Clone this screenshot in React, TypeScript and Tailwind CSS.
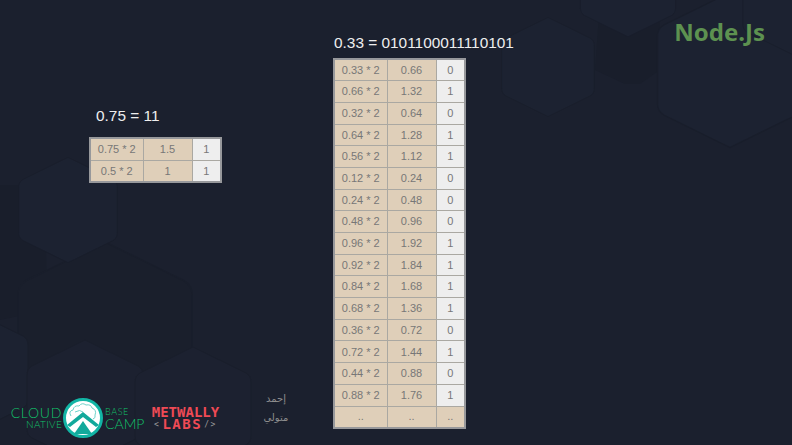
const first = [
  ["0.75 * 2", "1.5", "1"],
  ["0.5 * 2", "1", "1"],
];

const second = [
  ["0.33 * 2", "0.66", "0"],
  ["0.66 * 2", "1.32", "1"],
  ["0.32 * 2", "0.64", "0"],
  ["0.64 * 2", "1.28", "1"],
  ["0.56 * 2", "1.12", "1"],
  ["0.12 * 2", "0.24", "0"],
  ["0.24 * 2", "0.48", "0"],
  ["0.48 * 2", "0.96", "0"],
  ["0.96 * 2", "1.92", "1"],
  ["0.92 * 2", "1.84", "1"],
  ["0.84 * 2", "1.68", "1"],
  ["0.68 * 2", "1.36", "1"],
  ["0.36 * 2", "0.72", "0"],
  ["0.72 * 2", "1.44", "1"],
  ["0.44 * 2", "0.88", "0"],
  ["0.88 * 2", "1.76", "1"],
  ["..", "..", ".."],
];

function BitTable({ rows, rowClass }: { rows: string[][]; rowClass: string }) {
  return (
    <table className="w-[131px] table-fixed border-collapse border-2 border-[#97989b] text-center text-[11px] text-[#777777]">
      <colgroup>
        <col className="w-[53px]" />
        <col className="w-[49px]" />
        <col className="w-[29px]" />
      </colgroup>
      <tbody>
        {rows.map((row, i) => (
          <tr key={i} className={rowClass}>
            <td className="border border-[#aaa8a2] bg-[#dfcfb9] p-0">{row[0]}</td>
            <td className="border border-[#aaa8a2] bg-[#dfcfb9] p-0">{row[1]}</td>
            <td className={"border border-[#aaa8a2] p-0 " + (row[2] === ".." ? "bg-[#dfcfb9]" : "bg-[#eeeeee]")}>
              {row[2]}
            </td>
          </tr>
        ))}
      </tbody>
    </table>
  );
}

function Hexagons() {
  // faint honeycomb behind the slide
  const hex = "M0 -62 L53 -36 Q58 -33 58 -27 L58 27 Q58 33 53 36 L0 62 L-53 36 Q-58 33 -58 27 L-58 -27 Q-58 -33 -53 -36 Z";
  const cells = [
    { x: 105, y: 335, s: 1.5, fill: "#1a1f2c" },
    { x: 68, y: 210, s: 0.85, fill: "#1c2231" },
    { x: -30, y: 372, s: 1, fill: "#1c2231" },
    { x: 85, y: 402, s: 1, fill: "#1c2130" },
    { x: 193, y: 409, s: 1, fill: "#1c2130" },
    { x: 548, y: 67, s: 0.8, fill: "#1c2231" },
    { x: 628, y: -14, s: 0.82, fill: "#1c2231" },
    { x: 730, y: 70, s: 1.25, fill: "#1c2231" },
    { x: 795, y: 0, s: 0.9, fill: "#1c2231" },
  ];
  return (
    <svg className="absolute inset-0" width="792" height="445" viewBox="0 0 792 445">
      <path d="M600 0 L660 0 L660 70 L640 84 L625 84 L595 70 Z" fill="#191e2b" />
      <path d="M0 185 L45 185 L47 310 L0 320 Z" fill="#191e2b" />
      {cells.map((c, i) => (
        <path key={i} d={hex} fill={c.fill} stroke="#191e2b" strokeWidth="1" transform={`translate(${c.x} ${c.y}) scale(${c.s})`} />
      ))}
    </svg>
  );
}

function CampBadge() {
  return (
    <svg width="40" height="40" viewBox="0 0 40 40" className="shrink-0">
      <circle cx="20" cy="20" r="18.5" fill="#ffffff" stroke="#12b5a5" strokeWidth="3" />
      <path
        d="M8 18 Q5 13 10 12 Q11 7 16 8 Q19 4 23 7 Q28 6 29 10 Q34 12 32 17 Q33 20 30 21"
        fill="none"
        stroke="#6fd3ca"
        strokeWidth="1"
      />
      <path d="M12 14 Q17 11 20 14" fill="none" stroke="#6fd3ca" strokeWidth="1" />
      <path d="M4 27 L20 14 L36 27 L33 29 L20 19 L7 29 Z" fill="#12a99b" />
      <path d="M11 36 L20 23 L29 36 Z" fill="#12a99b" />
    </svg>
  );
}

function Logos() {
  return (
    <div className="flex items-center text-[#12c26a]">
      <div className="flex w-[50px] flex-col items-end pb-[2px] font-['Lato',sans-serif] font-light leading-none">
        <span className="h-[13px] text-[14px] leading-[13px] tracking-[0.7px]">CLOUD</span>
        <span className="h-[10px] text-[10px] leading-[10px] tracking-[0.3px]">NATIVE</span>
      </div>
      <div className="ml-[1px]">
        <CampBadge />
      </div>
      <div className="ml-[2px] flex flex-col pt-[2px] font-['Lato',sans-serif] font-light">
        <span className="h-[9px] text-[9px] leading-[9px] tracking-[0.6px]">BASE</span>
        <span className="h-[15px] text-[14px] leading-[15px]">CAMP</span>
      </div>
      <div className="ml-[5px] flex w-[72px] flex-col items-center font-['DejaVu_Sans_Mono',monospace] font-bold text-[#ef4a55]">
        <span className="h-[12px] text-[14px] leading-[12px]">METWALLY</span>
        <span className="flex h-[13px] items-center gap-[2px] text-[14px] leading-[13px] tracking-[1.5px]">
          <span className="text-[8px] font-normal text-[#9a9a9a]">&lt;</span>
          LABS
          <span className="text-[8px] font-normal text-[#9a9a9a]">/&gt;</span>
        </span>
      </div>
      <div
        dir="rtl"
        className="ml-[42px] -mt-[6px] flex flex-col items-center gap-[6px] self-start font-['DejaVu_Sans',sans-serif] text-[10px] leading-[13px] text-[#8d8d8d]"
      >
        <span>إحمد</span>
        <span>متولي</span>
      </div>
    </div>
  );
}

export default function App() {
  return (
    <div className="relative h-[445px] w-[792px] overflow-hidden bg-[#1b202e] font-['Liberation_Sans',sans-serif]">
      <Hexagons />
      <div className="relative flex h-full">
        {/* left column */}
        <div className="flex w-[333px] flex-col pb-[7px] pl-[12px] pt-[106px]">
          <div className="ml-[77px]">
            <p className="ml-[7px] text-[15.4px] leading-[20px] text-[#eeeeee]">0.75 = 11</p>
            <div className="mt-[11px]">
              <BitTable rows={first} rowClass="h-[22px]" />
            </div>
          </div>
          <div className="mt-auto">
            <Logos />
          </div>
        </div>

        {/* center column */}
        <div className="pt-[33px]">
          <p className="ml-px text-[15.4px] leading-[20px] text-[#eeeeee]">0.33 = 0101100011110101</p>
          <div className="mt-[5px]">
            <BitTable rows={second} rowClass="h-[21.7px]" />
          </div>
        </div>

        {/* title */}
        <div className="ml-auto pr-[27px] pt-[17px]">
          <p className="font-['Noto_Sans',sans-serif] text-[24px] font-bold leading-[30px] text-[#5d9150]">Node.Js</p>
        </div>
      </div>
    </div>
  );
}
